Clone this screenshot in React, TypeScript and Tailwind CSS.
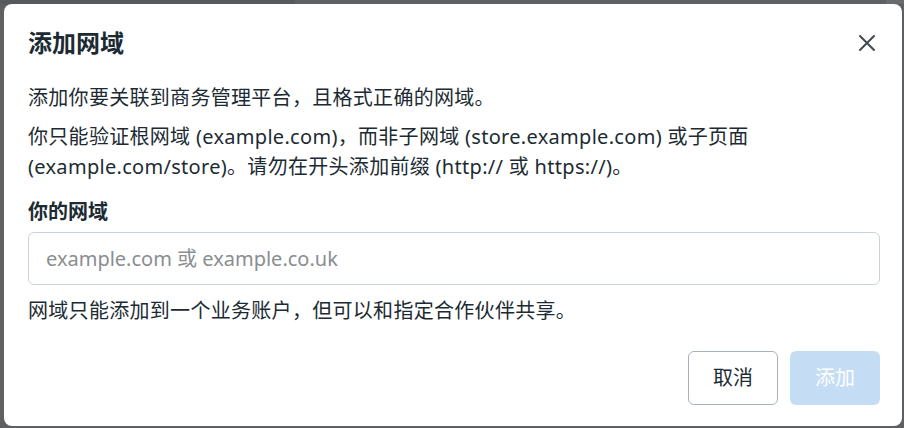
import React from "react";

const font = { fontFamily: '"Noto Sans", "Noto Sans CJK SC", sans-serif' };

function CloseIcon() {
  return (
    <svg width="18" height="18" viewBox="0 0 18 18" fill="none">
      <path d="M2 2L16 16M16 2L2 16" stroke="#444950" strokeWidth="2" strokeLinecap="round" />
    </svg>
  );
}

export default function App() {
  return (
    <div className="w-[904px] h-[428px] bg-[#5f6062] overflow-hidden relative" style={font}>
      {/* dimmed page peeking above the dialog */}
      <div className="absolute left-0 top-0 w-[295px] h-[4px] bg-[#58595b]" />
      <div className="absolute left-[886px] top-0 w-[18px] h-[4px] bg-[#6a6b6d]" />

      <div className="relative ml-[4px] mt-[4px] w-[898px] h-[422px] bg-white rounded-[8px] pl-[24px] pr-[22px] pt-[23px] text-[#1c2b33]">
        <div className="flex items-center justify-between h-[32px]">
          <h2 className="text-[24px] leading-[32px] font-bold">添加网域</h2>
          <button className="mr-[-5px] w-[36px] h-[36px] flex items-center justify-center">
            <CloseIcon />
          </button>
        </div>

        <p className="mt-[24px] text-[20px] leading-[30px] tracking-[0.3px]">添加你要关联到商务管理平台，且格式正确的网域。</p>
        <p className="mt-[9px] text-[20px] leading-[30px] tracking-[0.3px]">
          你只能验证根网域 (example.com)，而非子网域 (store.example.com) 或子页面 (example.com/store)。请勿在开头添加前缀 (http:// 或 https://)。
        </p>

        <div className="mt-[15px] text-[20px] leading-[30px] font-bold">你的网域</div>
        <input
          className="mt-[5px] w-full h-[53px] rounded-[6px] border border-[#cbd2d9] px-[17px] text-[20px] outline-none placeholder:text-[#8a8d91]"
          placeholder="example.com 或 example.co.uk"
          style={font}
        />
        <p className="mt-[11px] text-[20px] leading-[30px] tracking-[0.3px]">网域只能添加到一个业务账户，但可以和指定合作伙伴共享。</p>

        <div className="mt-[25px] flex justify-end gap-[12px]">
          <button className="w-[90px] h-[54px] rounded-[6px] border border-[#a8b2bd] bg-white text-[20px] text-[#1c2b33]">
            取消
          </button>
          <button className="w-[90px] h-[54px] rounded-[6px] bg-[#c4ddf5] text-[20px] text-white">添加</button>
        </div>
      </div>
    </div>
  );
}
